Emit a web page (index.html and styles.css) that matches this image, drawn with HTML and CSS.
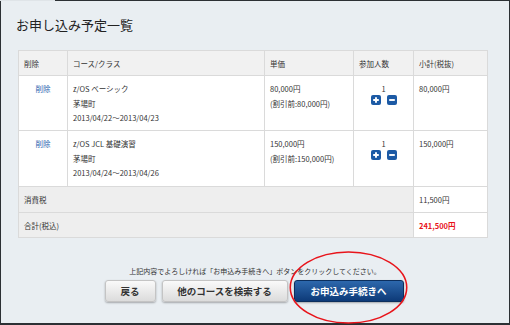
FILE: index.html
```html
<!DOCTYPE html>
<html lang="ja">
<head>
  <meta charset="UTF-8">
  <title>お申し込み予定一覧</title>
  <link rel="stylesheet" href="styles.css">
</head>
<body>
  <div class="frame">
    <h1 class="title">お申し込み予定一覧</h1>

    <table class="cart">
      <colgroup>
        <col class="c-del">
        <col class="c-course">
        <col class="c-price">
        <col class="c-qty">
        <col class="c-sub">
      </colgroup>
      <thead>
        <tr>
          <th>削除</th>
          <th>コース/クラス</th>
          <th>単価</th>
          <th>参加人数</th>
          <th>小計(税抜)</th>
        </tr>
      </thead>
      <tbody>
        <tr class="item first">
          <td class="del"><a href="#">削除</a></td>
          <td>z/OS ベーシック<br>茅場町<br>2013/04/22～2013/04/23</td>
          <td>80,000円<br>(割引前:80,000円)</td>
          <td class="qty">
            1
            <div class="qty-btns">
              <span class="qbtn"><svg viewBox="0 0 10 10"><path d="M5 2.2v5.6M2.2 5h5.6"/></svg></span>
              <span class="qbtn"><svg viewBox="0 0 10 10"><path d="M2.2 5h5.6"/></svg></span>
            </div>
          </td>
          <td>80,000円</td>
        </tr>
        <tr class="item">
          <td class="del"><a href="#">削除</a></td>
          <td>z/OS JCL 基礎演習<br>茅場町<br>2013/04/24～2013/04/26</td>
          <td>150,000円<br>(割引前:150,000円)</td>
          <td class="qty">
            1
            <div class="qty-btns">
              <span class="qbtn"><svg viewBox="0 0 10 10"><path d="M5 2.2v5.6M2.2 5h5.6"/></svg></span>
              <span class="qbtn"><svg viewBox="0 0 10 10"><path d="M2.2 5h5.6"/></svg></span>
            </div>
          </td>
          <td>150,000円</td>
        </tr>
        <tr class="sum">
          <th colspan="4">消費税</th>
          <td>11,500円</td>
        </tr>
        <tr class="sum total">
          <th colspan="4">合計(税込)</th>
          <td>241,500円</td>
        </tr>
      </tbody>
    </table>

    <p class="note">上記内容でよろしければ「お申込み手続きへ」ボタンをクリックしてください。</p>

    <div class="actions">
      <button class="btn btn-back">戻る</button>
      <button class="btn btn-search">他のコースを検索する</button>
      <button class="btn btn-go">お申込み手続きへ</button>
      <svg class="mark" viewBox="0 0 122 76"><ellipse cx="61" cy="38" rx="59" ry="36"/></svg>
    </div>
  </div>
</body>
</html>
```

FILE: styles.css
```css
body {
  margin: 0;
  font-family: "Noto Sans CJK JP", "Noto Sans", sans-serif;
  color: #333;
}
.frame {
  position: relative;
  width: 510px;
  height: 325px;
  box-sizing: border-box;
  border: 1px solid #2c3034;
  border-bottom-width: 2px;
  background: #e9eef2;
  padding: 15px 0 0 15px;
}
/* the top edge of the capture stays light on the far left */
.frame::before {
  content: "";
  position: absolute;
  top: -1px;
  left: -1px;
  width: 55px;
  height: 1px;
  background: #dfe4e8;
}
.title {
  margin: 0;
  font-size: 13px;
  font-weight: normal;
  line-height: 18px;
  color: #222;
}
.cart {
  margin: 16px 0 0 2px;
  width: 469px;
  table-layout: fixed;
  border-collapse: collapse;
  background: #fff;
  font-size: 7.5px;
  border: 1px solid #cfcfcf;
}
.c-del { width: 49px; }
.c-course { width: 197px; }
.c-price { width: 89px; }
.c-qty { width: 60px; }
.c-sub { width: 74px; }
th, td {
  border: 1px solid #dadada;
  padding: 0 5px;
  text-align: left;
  font-weight: normal;
}
thead tr {
  height: 25px;
  background: #f1f1f1;
}
.item td {
  height: 56px;
  vertical-align: top;
  padding-top: 6px;
  line-height: 14.5px;
  box-sizing: border-box;
}
.item.first td {
  height: 55px;
}
.del {
  text-align: center;
}
.del a {
  color: #2a64b0;
  text-decoration: none;
}
.qty {
  text-align: center;
}
.qty-btns {
  display: flex;
  justify-content: center;
  gap: 6px;
  margin-top: -2px;
}
.qbtn {
  width: 10px;
  height: 10px;
  border-radius: 2px;
  background: #1c5aa5;
  display: block;
}
.qbtn svg {
  display: block;
  width: 10px;
  height: 10px;
  stroke: #fff;
  stroke-width: 1.9;
}
.sum th {
  background: #eeeeee;
}
.sum th, .sum td {
  height: 25px;
}
.total th, .total td {
  height: 24px;
}
.total td {
  color: #e8131b;
  font-weight: bold;
}
.note {
  margin: 28px 0 0 0;
  padding-right: 15px;
  font-size: 7px;
  line-height: 10px;
  text-align: center;
}
.actions {
  display: flex;
  justify-content: center;
  gap: 6px;
  margin: 4px 0 0 -2px;
  padding-right: 15px;
}
.btn {
  height: 22px;
  padding: 0;
  border: 1px solid #c4c4c4;
  border-radius: 3px;
  background: linear-gradient(#fafafa, #dcdcdc);
  box-shadow: 0 1px 2px rgba(0,0,0,0.3);
  font-family: inherit;
  font-size: 9.5px;
  font-weight: bold;
  color: #333;
}
.btn-back { width: 51px; }
.btn-search { width: 126px; }
.btn-go {
  width: 110px;
  border-color: #0c2f5e;
  background: linear-gradient(#2d68ad, #0d3a78);
  color: #fff;
}
.mark {
  position: absolute;
  left: 287px;
  top: 249px;
  width: 121px;
  height: 75px;
  fill: none;
  stroke: #e8141b;
  stroke-width: 1.6;
}
```
